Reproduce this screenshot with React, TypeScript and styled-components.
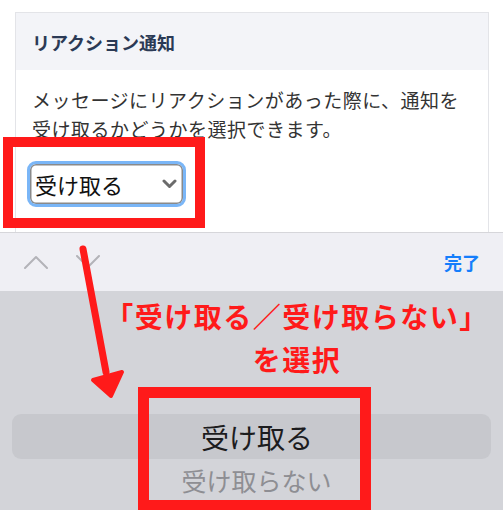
import styled, { createGlobalStyle } from "styled-components";

const GlobalStyle = createGlobalStyle`
  html, body {
    margin: 0;
    padding: 0;
    background: #ffffff;
    overflow: hidden;
  }
  body {
    font-family: "Noto Sans CJK JP", "Noto Sans", sans-serif;
  }
`;

const Page = styled.div`
  position: relative;
  width: 503px;
  height: 510px;
  overflow: hidden;
  display: flex;
  flex-direction: column;
  background: #ffffff;
`;

const Top = styled.div`
  padding: 12px 14px 0 15px;
`;

const Card = styled.div`
  border: 1px solid #e3e4e8;
  border-bottom: none;
  display: flex;
  flex-direction: column;
`;

const CardHeader = styled.div`
  height: 57px;
  background: #f3f4f8;
  display: flex;
  align-items: center;
  padding-left: 16px;
  font-size: 18px;
  font-weight: 700;
  color: #2b3a55;
`;

const CardBody = styled.div`
  padding: 15px 16px 25px;
  display: flex;
  flex-direction: column;
  align-items: flex-start;
`;

const Description = styled.p`
  margin: 0;
  font-size: 19px;
  line-height: 29px;
  letter-spacing: 0.5px;
  color: #333333;
`;

const SelectBox = styled.div`
  margin: 18px 0 0 -5px;
  width: 159px;
  height: 46px;
  box-sizing: border-box;
  border: 3px solid #7ab6f7;
  border-radius: 9px;
  box-shadow: inset 0 0 0 1.5px #8a8a8a;
  display: flex;
  align-items: center;
  justify-content: space-between;
  padding: 0 6px 0 5px;
  font-size: 22px;
  color: #111111;
`;

const Toolbar = styled.div`
  height: 58px;
  background: #efeff4;
  border-top: 1px solid #d6d6da;
  display: flex;
  align-items: center;
  padding: 0 23px 0 24px;
`;

const NavGroup = styled.div`
  display: flex;
  gap: 28px;
  flex: 1;
`;

const Done = styled.span`
  font-size: 18px;
  font-weight: 700;
  color: #157efb;
`;

const Picker = styled.div`
  flex: 1;
  background: #d3d4d9;
  display: flex;
  flex-direction: column;
`;

const Caption = styled.div`
  padding: 4px 0 0 91px;
  text-align: center;
  font-size: 28px;
  line-height: 43px;
  font-weight: 700;
  color: #ff1a1a;
  letter-spacing: 1.5px;
`;

const SelectedRow = styled.div`
  margin: 33px 12px 0;
  height: 45px;
  border-radius: 9px;
  background: #c7c8cd;
  display: flex;
  align-items: center;
  justify-content: center;
  padding-left: 11px;
  font-size: 28px;
  color: #1c1c1e;
`;

const OptionRow = styled.div`
  height: 42px;
  display: flex;
  align-items: center;
  justify-content: center;
  padding-left: 10px;
  font-size: 25px;
  color: #8e8e93;
`;

const Highlight = styled.div<{ $x: number; $y: number; $w: number; $h: number; $t: number }>`
  position: absolute;
  left: ${(p) => p.$x}px;
  top: ${(p) => p.$y}px;
  width: ${(p) => p.$w}px;
  height: ${(p) => p.$h}px;
  box-sizing: border-box;
  border: ${(p) => p.$t}px solid #ff1a1a;
  pointer-events: none;
`;

const ArrowLayer = styled.svg`
  position: absolute;
  left: 0;
  top: 0;
  pointer-events: none;
`;

function Chevron({ up }: { up?: boolean }) {
  return (
    <svg width="24" height="14" viewBox="0 0 24 14">
      <path
        d={up ? "M1 13 L12 2 L23 13" : "M1 1 L12 12 L23 1"}
        fill="none"
        stroke="#b3b3b8"
        strokeWidth="2"
        strokeLinecap="round"
        strokeLinejoin="round"
      />
    </svg>
  );
}

export default function App() {
  return (
    <>
      <GlobalStyle />
      <Page>
        <Top>
          <Card>
            <CardHeader>リアクション通知</CardHeader>
            <CardBody>
              <Description>
                メッセージにリアクションがあった際に、通知を
                <br />
                受け取るかどうかを選択できます。
              </Description>
              <SelectBox>
                受け取る
                <svg width="15" height="10" viewBox="0 0 15 10">
                  <path
                    d="M2 2 L7.5 7.5 L13 2"
                    fill="none"
                    stroke="#6b6b6b"
                    strokeWidth="3"
                    strokeLinecap="round"
                    strokeLinejoin="round"
                  />
                </svg>
              </SelectBox>
            </CardBody>
          </Card>
        </Top>
        <Toolbar>
          <NavGroup>
            <Chevron up />
            <Chevron />
          </NavGroup>
          <Done>完了</Done>
        </Toolbar>
        <Picker>
          <Caption>
            「受け取る／受け取らない」
            <br />
            を選択
          </Caption>
          <SelectedRow>受け取る</SelectedRow>
          <OptionRow>受け取らない</OptionRow>
        </Picker>

        <Highlight $x={3} $y={137} $w={202} $h={91} $t={10} />
        <Highlight $x={138} $y={387} $w={233} $h={124} $t={11} />
        <ArrowLayer width="503" height="510" viewBox="0 0 503 510">
          <line x1="83" y1="249" x2="106" y2="372" stroke="#ff1a1a" strokeWidth="7" strokeLinecap="round" />
          <polygon
            points="93,380 122,372 111,396"
            fill="#ff1a1a"
            stroke="#ff1a1a"
            strokeWidth="4"
            strokeLinejoin="round"
          />
        </ArrowLayer>
      </Page>
    </>
  );
}
